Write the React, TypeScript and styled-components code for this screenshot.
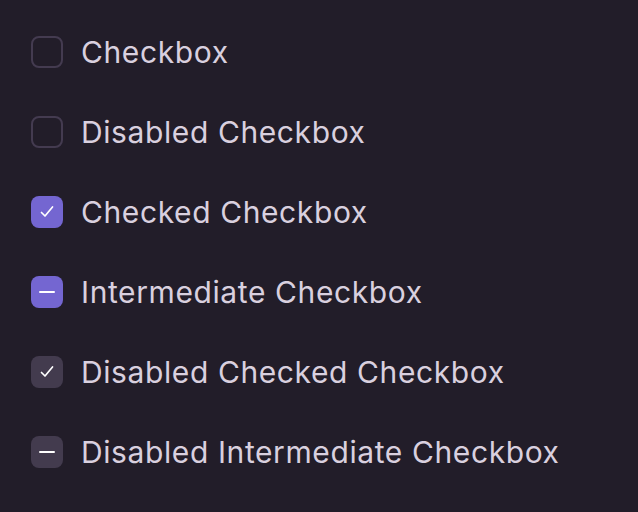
import React from "react";
import styled, { createGlobalStyle } from "styled-components";

const Global = createGlobalStyle`
  html, body { margin: 0; padding: 0; background: #221d29; }
  body { font-family: Inter, "Noto Sans", sans-serif; }
`;

const List = styled.div`
  display: flex;
  flex-direction: column;
  gap: 48px;
  padding: 36px 0 0 31px;
  min-height: 512px;
  box-sizing: border-box;
  background: #221d29;
`;

const Row = styled.label`
  display: flex;
  align-items: center;
  gap: 18px;
  height: 32px;
  color: #d9d0df;
  font-size: 30px;
  line-height: 32px;
  letter-spacing: 0.6px;
`;

type BoxState = "off" | "on" | "mixed";

const Box = styled.span<{ $state: BoxState; $disabled?: boolean }>`
  width: 32px;
  height: 32px;
  box-sizing: border-box;
  border-radius: 8px;
  flex: none;
  display: flex;
  align-items: center;
  justify-content: center;
  border: ${(p) => (p.$state === "off" ? "2.5px solid #443b50" : "none")};
  background: ${(p) =>
    p.$state === "off" ? "transparent" : p.$disabled ? "#433b4e" : "#7466d1"};
`;

const Check = () => (
  <svg width="14" height="14" viewBox="0 0 14 14" fill="none">
    <path d="M1.5 7.5 L5 11 L12.5 2" stroke="#fff" strokeWidth="1.7" strokeLinecap="round" strokeLinejoin="round" />
  </svg>
);

const Dash = () => (
  <svg width="16" height="4" viewBox="0 0 16 4" fill="none">
    <path d="M1 2 H15" stroke="#fff" strokeWidth="2" strokeLinecap="round" />
  </svg>
);

const items: { label: string; state: BoxState; disabled?: boolean }[] = [
  { label: "Checkbox", state: "off" },
  { label: "Disabled Checkbox", state: "off", disabled: true },
  { label: "Checked Checkbox", state: "on" },
  { label: "Intermediate Checkbox", state: "mixed" },
  { label: "Disabled Checked Checkbox", state: "on", disabled: true },
  { label: "Disabled Intermediate Checkbox", state: "mixed", disabled: true },
];

export default function App() {
  return (
    <>
      <Global />
      <List>
        {items.map((it) => (
          <Row key={it.label}>
            <Box $state={it.state} $disabled={it.disabled}>
              {it.state === "on" && <Check />}
              {it.state === "mixed" && <Dash />}
            </Box>
            {it.label}
          </Row>
        ))}
      </List>
    </>
  );
}
